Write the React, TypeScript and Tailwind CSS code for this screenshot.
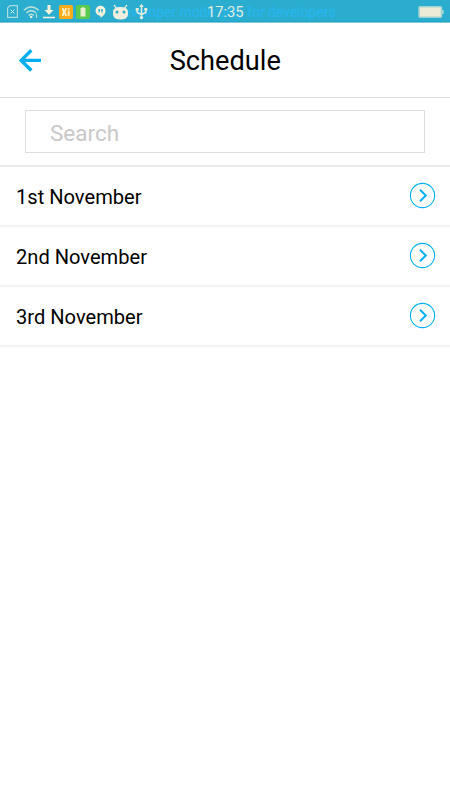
import React from "react";

const days = ["1st November", "2nd November", "3rd November"];

function StatusIcons() {
  return (
    <div className="relative flex h-[22px] items-center pl-[7px] pt-px">
      <svg width="11" height="13" viewBox="0 0 11 13" fill="none" stroke="#a9dcdb">
        <path d="M3 .6H10.4V12.4H.6V3Z" strokeWidth="1.2" />
        <path d="M3.5 4.5l4 4M7.5 4.5l-4 4" stroke="#d5eadd" />
      </svg>
      <svg className="ml-[5px]" width="17" height="14" viewBox="0 0 17 14" fill="none" stroke="#b9e1da" strokeWidth="1.5">
        <path d="M.8 5.2Q8 -1.5 15.7 5.2M3.3 8Q8.2 3.2 13.2 8M5.7 10.5Q8.2 7.9 10.8 10.5" />
        <circle cx="8.2" cy="12" r="1.3" fill="#ededdc" stroke="none" />
        <path d="M13.5 9v4" strokeWidth="1.2" />
      </svg>
      <svg className="ml-[3px]" width="12" height="14" viewBox="0 0 12 14" fill="#fbf4dd">
        <path d="M4.5 0h3v5H10.5L6 9.8 1.5 5h3zM0 11.8h12V13.3H0z" />
      </svg>
      <svg className="ml-[4px]" width="14" height="14" viewBox="0 0 14 14">
        <rect width="14" height="14" rx="2" fill="#fdab18" />
        <path d="M3 3h1.5l.8 2.4L6.1 3h1.5v1.8L6.5 7l1.1 2.2V11H6.1l-.8-2.4L4.5 11H3V9.2L4.1 7 3 4.8zM8.8 5.8h1.8V11H8.8zM8.8 3h1.8v1.7H8.8z" fill="#fff0c6" />
      </svg>
      <svg className="ml-[3px]" width="14" height="14" viewBox="0 0 14 14">
        <rect width="14" height="14" rx="2" fill="#5bc850" />
        <path d="M4.5 3h1.2v-.7h2.6V3h1.2v8.5h-5z" fill="#e6efcb" />
      </svg>
      <svg className="ml-[5px]" width="11" height="14" viewBox="0 0 11 14">
        <path d="M5.5.8a5 5 0 0 1 5 5c0 3-2 5-5 7v-2A5 5 0 0 1 5.5.8" fill="#fcf3dc" />
        <path d="M3.2 4.3h1.9v2L4.2 7.8h-.7L4 6.3h-.8zM6 4.3h1.9v2L7 7.8h-.7l.5-1.5H6z" fill="#2db0ca" />
      </svg>
      <svg className="ml-[6px]" width="17" height="16" viewBox="0 0 17 16">
        <path d="M2 .8l2.5 3.5M15 .8l-2.5 3.5" stroke="#e9eddc" strokeWidth="1.3" />
        <path d="M1 8Q1 3 8.5 3T16 8V11Q15 15.5 8.5 15.5T1 11Z" fill="#f0eedc" />
        <circle cx="5" cy="8" r="1.5" fill="#2badcb" />
        <circle cx="12" cy="8" r="1.5" fill="#2badcb" />
      </svg>
      <svg className="ml-[6px]" width="13" height="17" viewBox="0 0 13 17" fill="none" stroke="#e5eddc" strokeWidth="1.5">
        <path d="M6.5 3v12M2.2 6v3.5l4.3 2M10.8 6v3.5l-4.3 2" />
        <path d="M4.3 4L6.5.8 8.7 4zM.7 5h3v2.7h-3zM9.3 5h3v2.7h-3z" fill="#e5eddc" stroke="none" />
        <circle cx="6.5" cy="14.6" r="1.7" fill="#e5eddc" stroke="none" />
      </svg>
    </div>
  );
}

export default function App() {
  return (
    <div className="min-h-[800px] w-[450px] overflow-hidden bg-white font-['Roboto',sans-serif] text-black">
      <header className="relative flex h-[22px] items-center justify-between bg-[#2badcf] shadow-[0_1px_0_#82c9dc,inset_0_-1px_0_#20a5c7]">
        <span className="absolute left-[114.5px] top-[3px] whitespace-nowrap text-[13.9px] leading-[18px] text-[#25b6f2]">
          Developer mode only for developers
        </span>
        <StatusIcons />
        <span className="absolute left-[207px] top-[3px] text-[14.7px] leading-[18px] text-[#e4ecdd]">17:35</span>
        <svg className="relative mr-[6px] mt-px" width="26" height="12" viewBox="0 0 26 12">
          <rect x="1" y=".8" width="22.5" height="10.4" rx="1" fill="#ecebd7" stroke="#9ed3cf" strokeWidth="1.5" />
          <path d="M24.3 4h1.2v4h-1.2z" fill="#d0e4d8" />
        </svg>
      </header>
      <nav className="flex h-[76px] items-center border-b border-[#dedede]">
        <button className="ml-[18px] w-[24px]" aria-label="Back">
          <svg width="24" height="24" viewBox="0 0 24 24" fill="none" stroke="#00aeef" strokeWidth="3.4">
            <path d="M13.3 2.2L3.2 12.4l10.1 10.1M3 12.4h20" />
          </svg>
        </button>
        <h1 className="mr-[41.5px] flex-1 pt-[2px] text-center text-[27.2px] leading-[32px]">Schedule</h1>
      </nav>
      <div className="h-[69px] border-b-2 border-[#ebebed] px-[25px] pt-[12px]">
        <input
          className="block h-[43px] w-full border border-[#dddde3] px-[24px] pt-[2px] text-[22.5px] outline-none placeholder:text-[#c9c9c9]"
          placeholder="Search"
          aria-label="Search"
        />
      </div>
      <ul>
        {days.map((day) => (
          <li key={day} className="flex h-[60px] items-center justify-between border-b-2 border-[#f4f4f4] pl-[16px] pr-[14px]">
            <span className="pt-px text-[20.1px] leading-[24px]">{day}</span>
            <svg className="-mt-px" width="27" height="27" viewBox="0 0 27 27" fill="none" stroke="#06b0f2">
              <circle cx="13.5" cy="13.5" r="12.1" strokeWidth="1.1" />
              <path d="M11 7.8l5.8 5.7-5.8 5.7" strokeWidth="2" />
            </svg>
          </li>
        ))}
      </ul>
    </div>
  );
}
